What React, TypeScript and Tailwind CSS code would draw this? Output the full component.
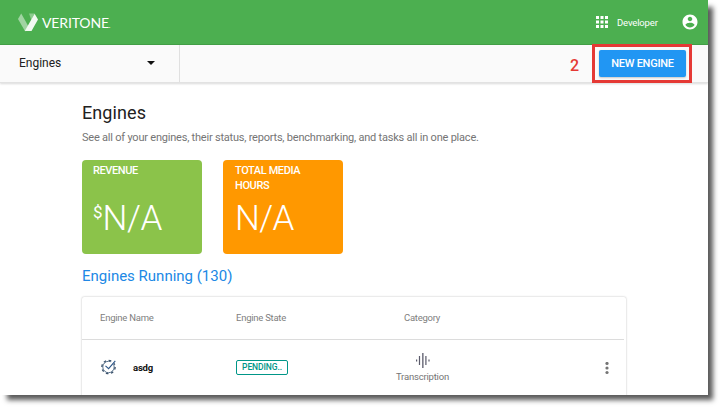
import React from "react";

function Logo() {
  return (
    <svg width="20" height="19" viewBox="0 0 20 19" className="block">
      <path d="M0 6 3.2 0.5 10.5 13.5 7.2 18.5Z" fill="#a0d4a2" />
      <path d="M11 0.5H16.5L13.5 7.5Z" fill="#8ccc8e" />
      <path d="M16.5 0.5 20 6.5 13.5 18H6.8L16.5 1Z" fill="#f1f9f1" />
    </svg>
  );
}

function GridIcon() {
  return (
    <svg width="12" height="12" viewBox="0 0 12 12" fill="#fff" className="block">
      {[0, 4.5, 9].map((y) =>
        [0, 4.5, 9].map((x) => <rect key={`${x}-${y}`} x={x} y={y} width="3" height="3" />)
      )}
    </svg>
  );
}

function AccountIcon() {
  return (
    <svg width="18" height="18" viewBox="0 0 24 24" fill="#fff" className="block">
      <path d="M12 2C6.48 2 2 6.48 2 12s4.48 10 10 10 10-4.48 10-10S17.52 2 12 2zm0 3c1.66 0 3 1.34 3 3s-1.34 3-3 3-3-1.34-3-3 1.34-3 3-3zm0 14.2c-2.5 0-4.71-1.28-6-3.22.03-1.99 4-3.08 6-3.08 1.99 0 5.97 1.09 6 3.08-1.29 1.94-3.5 3.22-6 3.22z" />
    </svg>
  );
}

function EngineIcon() {
  return (
    <svg width="16" height="16" viewBox="0 0 16 16" fill="none" className="block">
      <circle cx="7.5" cy="8" r="6.6" stroke="#3b526b" strokeWidth="1.4" strokeDasharray="2.6 2.58" />
      <circle cx="7.5" cy="8" r="5.7" stroke="#4a6480" strokeWidth="0.9" />
      <path d="M10.5 5 14 1.2" stroke="#fff" strokeWidth="3" />
      <path d="M4.5 6.8 7.6 9.6 14.3 1.8" stroke="#2c5688" strokeWidth="1.1" />
    </svg>
  );
}

function WaveIcon() {
  return (
    <svg width="14" height="15" viewBox="0 0 14 15" fill="#5b5b6b" className="block">
      <rect x="0" y="6.5" width="1.2" height="2" />
      <rect x="2.9" y="3" width="1.2" height="9" />
      <rect x="6.2" y="0" width="1.3" height="15" />
      <rect x="9.3" y="3" width="1.2" height="9" />
      <rect x="12.4" y="6.5" width="1.2" height="2" />
    </svg>
  );
}

export default function App() {
  return (
    <div className="h-[410px] w-[723px] overflow-hidden bg-white font-[Roboto,sans-serif] whitespace-nowrap">
      <div className="flex h-[395px] w-[708px] flex-col overflow-hidden bg-white shadow-[6px_6px_5px_-1px_rgba(0,0,0,0.65)]">
        <header className="flex h-[45px] shrink-0 items-center border-b border-[#43a047] bg-[#4caf50] pl-[18px] text-white">
          <Logo />
          <div className="mt-[4px] ml-1 w-[550px] font-[Lato,sans-serif] text-[14px] leading-5 tracking-[-0.15px]">
            VERITONE<span className="text-[7px]">.</span>
          </div>
          <div className="ml-1"><GridIcon /></div>
          <span className="mt-[2px] ml-[9px] w-[41px] text-[9.5px] leading-4 tracking-[-0.15px]">Developer</span>
          <div className="ml-[23px]"><AccountIcon /></div>
        </header>

        <nav className="flex h-[38px] shrink-0 items-stretch border-b border-[#e2e2e2] bg-[#fafafa] shadow-[0_1px_2px_rgba(0,0,0,0.15)]">
          <div className="flex w-[180px] items-center justify-between border-r border-[#e0e0e0] pr-[24px] pb-[2px] pl-[19px]">
            <span className="text-[12px] text-[#212121]">Engines</span>
            <svg width="8" height="4" viewBox="0 0 8 4" className="block"><path d="M0 0H8L4 4Z" fill="#111" /></svg>
          </div>
          <div className="flex flex-1 items-start justify-end pr-[16px]">
            <span className="mt-[10px] mr-[13px] text-[16px] leading-[22px] font-medium text-[#e53935]">2</span>
            <div className="-mt-[1px] flex h-[39px] w-[100px] items-center justify-center border-[3px] border-[#e53935] pl-[1px]">
              <button className="h-[27px] w-[87px] rounded-[2px] bg-[#2196f3] text-[11px] leading-[27px] font-medium tracking-[-0.25px] text-white shadow-[0_1px_2px_rgba(0,0,0,0.2)]">NEW ENGINE</button>
            </div>
          </div>
        </nav>

        <main className="flex flex-1 flex-col px-[82px] pt-[18px]">
          <h1 className="text-[18px] leading-6 tracking-[0.1px] text-[#212121]">Engines</h1>
          <p className="mt-[5px] text-[11px] leading-4 tracking-[-0.215px] text-[#757575]">See all of your engines, their status, reports, benchmarking, and tasks all in one place.</p>
          <div className="mt-[14px] flex shrink-0 gap-[21px] text-white">
            <div className="h-[94px] w-[120px] rounded-[4px] bg-[#8bc34a] pt-[3px] pl-[11px]">
              <div className="h-[30px] text-[11px] leading-[15px] font-medium tracking-[-0.4px]">REVENUE</div>
              <div className="mt-[6px] flex items-start leading-10">
                <span className="text-[17px] leading-[26px]">$</span>
                <span className="text-[35px] font-light tracking-[-0.4px]">N/A</span>
              </div>
            </div>
            <div className="h-[94px] w-[120px] rounded-[4px] bg-[#ff9800] pt-[3px] pl-[12px]">
              <div className="h-[30px] text-[11px] leading-[15px] font-medium tracking-[-0.4px]">TOTAL MEDIA<br />HOURS</div>
              <div className="mt-[6px] text-[35px] leading-10 font-light tracking-[-0.7px]">N/A</div>
            </div>
          </div>
          <h2 className="mt-[12px] text-[15px] leading-5 text-[#2088e5]">Engines Running (130)</h2>
          <section className="mt-[11px] h-[110px] shrink-0 rounded-[2px] bg-white shadow-[0_0_2px_rgba(0,0,0,0.3)]">
            <div className="mr-[2px] flex h-[43px] items-center border-b border-[#dcdcdc] pl-[18px] text-[9.5px] tracking-[-0.25px] text-[#808080]">
              <span className="w-[136px]">Engine Name</span>
              <span className="w-[168px]">Engine State</span>
              <span>Category</span>
            </div>
            <div className="flex h-[58px] items-start pl-[19px]">
              <div className="mt-[19px] w-[32px]"><EngineIcon /></div>
              <span className="mt-[20px] w-[103px] text-[9.5px] leading-4 font-bold tracking-[-0.2px] text-[#111]">asdg</span>
              <div className="mt-[20px] h-[15px] w-[52px] rounded-[2px] border border-[#009688] text-center text-[8.5px] leading-[13px] font-medium tracking-[-0.1px] text-[#009688]">PENDING..</div>
              <div className="ml-[108px] flex w-[53px] flex-col items-center pt-[13px] text-[9.5px] leading-[14px] text-[#757575]">
                <WaveIcon />
                <span className="mt-[2px] tracking-[-0.2px]">Transcription</span>
              </div>
              <svg width="4" height="14" viewBox="0 0 4 14" fill="#757575" className="mt-[22px] ml-[156px] block">
                <circle cx="2" cy="1.5" r="1.6" /><circle cx="2" cy="6" r="1.6" /><circle cx="2" cy="10.5" r="1.6" />
              </svg>
            </div>
          </section>
        </main>
      </div>
    </div>
  );
}
